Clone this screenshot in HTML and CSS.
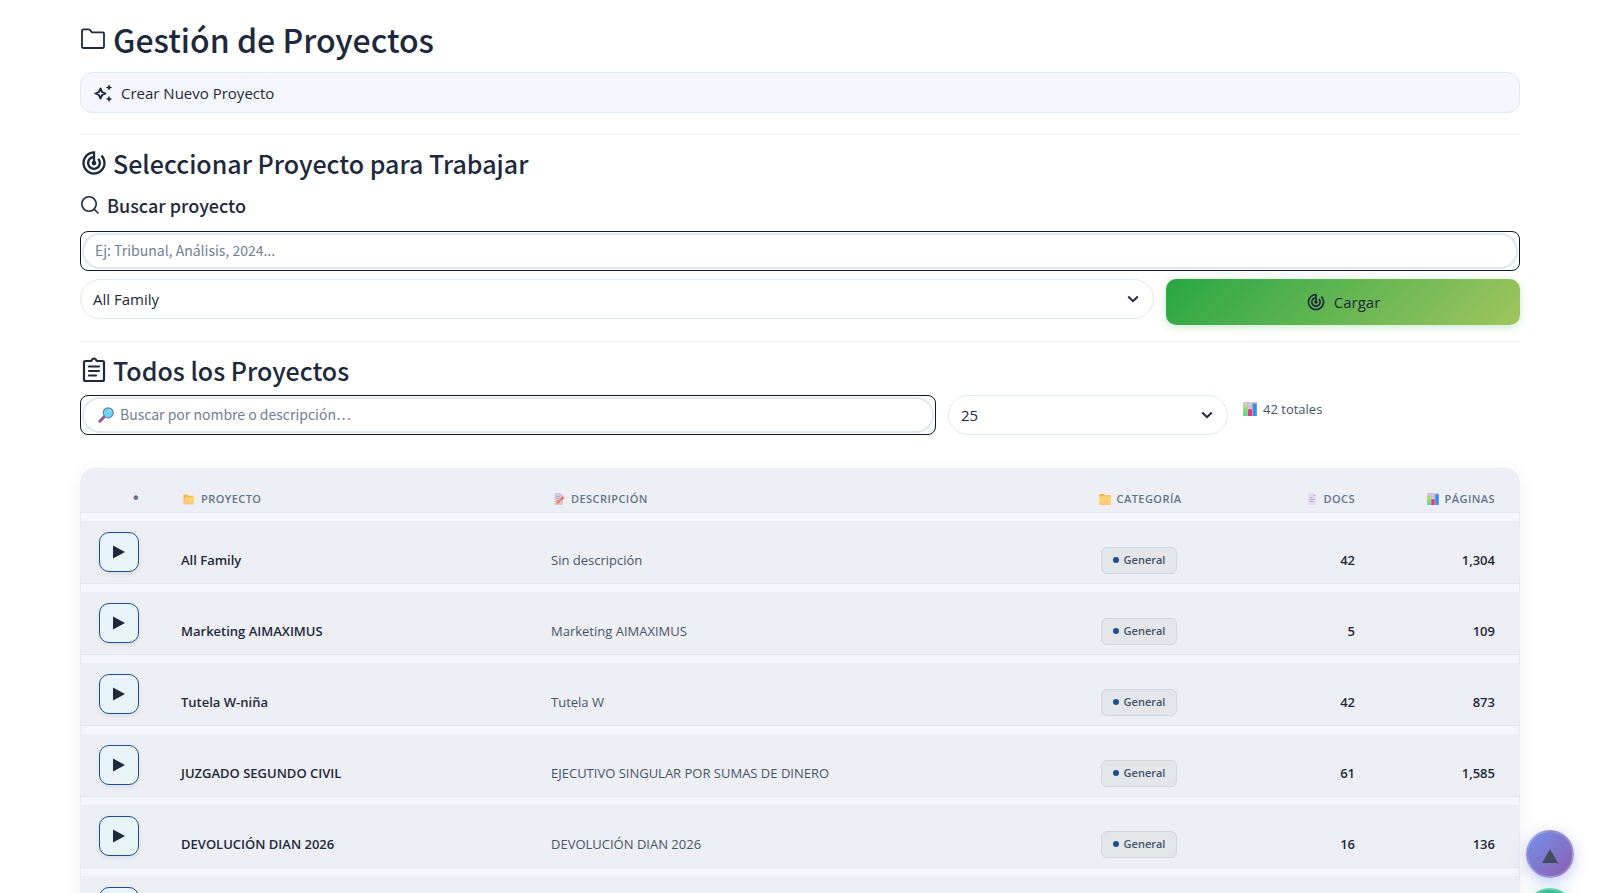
FILE: index.html
```html
<!DOCTYPE html>
<html lang="es">
<head>
<meta charset="UTF-8">
<meta name="viewport" content="width=device-width, initial-scale=1.0">
<title>Gestión de Proyectos</title>
<link rel="stylesheet" href="styles.css">
</head>
<body>

<main class="page">
    <h1 class="title">
        <svg class="icon-title" viewBox="0 0 26 26" aria-hidden="true"><path fill="none" stroke="currentColor" stroke-width="1.800" stroke-linejoin="round" d="M2 4.500Q2 3.300 3.200 3.300H8.600Q9.300 3.300 9.800 3.800L12 6.300H22.800Q24 6.300 24 7.500V20.800Q24 22 22.800 22H3.200Q2 22 2 20.800z"/></svg>
        Gestión de Proyectos
    </h1>

    <button class="expander" type="button">
        <svg class="icon-small" viewBox="0 0 20 20" aria-hidden="true"><path fill="none" stroke="currentColor" stroke-width="1.900" stroke-linejoin="round" d="M7.500 5.500L9.100 9l3.500 1.500L9.100 12l-1.600 3.500L5.900 12l-3.500-1.500L5.900 9z"/><path fill="currentColor" d="M16 1.200l1 2.200 2.200 1-2.200 1-1 2.200-1-2.200-2.200-1 2.200-1zM16 12.800l1 2.200 2.200 1-2.200 1-1 2.200-1-2.200-2.200-1 2.200-1z"/></svg>
        Crear Nuevo Proyecto
    </button>

    <hr class="divider">

    <!-- Project picker -->
    <h2 class="heading">
        <svg class="icon-heading" aria-hidden="true"><use href="#target"/></svg>
        Seleccionar Proyecto para Trabajar
    </h2>
    <label class="search-label" for="projectSearch">
        <svg class="icon-small" viewBox="0 0 20 20" aria-hidden="true"><g fill="none" stroke="currentColor" stroke-width="1.600" stroke-linecap="round"><circle cx="9" cy="9" r="7.200"/><path d="M14.500 14.500l3.500 3.500"/></g></svg>
        Buscar proyecto
    </label>
    <div class="field">
        <input id="projectSearch" type="text" placeholder="Ej: Tribunal, Análisis, 2024...">
    </div>
    <div class="picker-row">
        <div class="select-box">
            <select aria-label="Proyecto">
                <option>All Family</option>
            </select>
            <svg class="chevron" aria-hidden="true"><use href="#chevron"/></svg>
        </div>
        <button class="load-button" type="button">
            <svg class="icon-small" aria-hidden="true"><use href="#target"/></svg>
            Cargar
        </button>
    </div>

    <hr class="divider">

    <!-- All projects -->
    <h2 class="heading">
        <svg class="icon-heading" viewBox="0 0 28 28" aria-hidden="true"><g fill="none" stroke="currentColor" stroke-width="2.200" stroke-linejoin="round" stroke-linecap="round"><path d="M5.500 5H10.500M17.500 5H22.500Q24 5 24 6.500V23.500Q24 25 22.500 25H5.500Q4 25 4 23.500V6.500Q4 5 5.500 5"/><path d="M10.500 5Q11.500 5 11.800 4.100Q12.500 2.500 14 2.500T16.200 4.100Q16.500 5 17.500 5"/><path d="M9 10.500H19M9 15H19M9 19.500H16"/></g></svg>
        Todos los Proyectos
    </h2>
    <div class="filter-row">
        <div class="field with-icon">
            <input type="text" aria-label="Buscar proyectos" placeholder="Buscar por nombre o descripción…">
            <svg class="field-icon" viewBox="0 0 16 16" aria-hidden="true"><path stroke="#8d5a97" stroke-width="3" stroke-linecap="round" d="M1.800 14.200L5.800 10.200"/><circle cx="10.200" cy="5.800" r="5" fill="#6fd3f5" stroke="#6d83ab" stroke-width="1.200"/><circle cx="12" cy="4" r="1" fill="#b7ecfc"/></svg>
        </div>
        <div class="select-box">
            <select aria-label="Proyectos por página">
                <option>25</option>
            </select>
            <svg class="chevron" aria-hidden="true"><use href="#chevron"/></svg>
        </div>
        <p class="total"><svg class="icon-chart" aria-hidden="true"><use href="#chart"/></svg>42 totales</p>
    </div>

    <div class="table-card">
        <table>
            <colgroup>
                <col class="col-open">
                <col class="col-name">
                <col>
                <col class="col-category">
                <col class="col-docs">
                <col class="col-pages">
            </colgroup>
            <thead>
                <tr>
                    <th class="open"><span class="dot">•</span></th>
                    <th><svg class="icon-th" viewBox="0 0 12 12" aria-hidden="true"><path fill="#f5b948" d="M.5 1.500h4l1 1.200H10V11H.5z"/><path fill="url(#folderFill)" d="M2.500 4.500H12L10.300 11.500H.5z"/></svg>Proyecto</th>
                    <th><svg class="icon-th" viewBox="0 0 12 12" aria-hidden="true"><path fill="#d5cbe0" d="M1.500 0h6l2.500 2.500V12H1.500z"/><path stroke="#b3a5c2" stroke-width=".8" d="M3 3.500h4M3 5.500h4M3 7.500h2"/><path stroke="#f9793f" stroke-width="2.200" d="M4 10.200L9 5.500"/><path stroke="#e9506a" stroke-width="2.200" d="M9 5.500L10.500 4.200"/></svg>Descripción</th>
                    <th class="center"><svg class="icon-th" viewBox="0 0 12 12" aria-hidden="true"><path fill="#f2b544" d="M.3 1h4.500L6 2.300h5.700V6H.3z"/><path fill="url(#folderFill)" d="M.3 3.500h11.400V12H.3z"/></svg>Categoría</th>
                    <th class="number"><svg class="icon-th" viewBox="0 0 12 12" aria-hidden="true"><path fill="#e6def0" d="M2 .5h5.500L10 3v9H2z"/><path fill="#c6b6d6" d="M7.500.5L10 3H7.500z"/><path stroke="#b5a3c6" stroke-width=".9" d="M3.500 4.500h3M3.500 6.500h5M3.500 8.500h4"/></svg>Docs</th>
                    <th class="number"><svg class="icon-th" aria-hidden="true"><use href="#chart"/></svg>Páginas</th>
                </tr>
            </thead>
            <tbody>
                <tr>
                    <td class="open"><button class="play" type="button" aria-label="Abrir"><svg aria-hidden="true"><use href="#play"/></svg></button></td>
                    <td class="name">All Family</td>
                    <td>Sin descripción</td>
                    <td class="center"><span class="badge">General</span></td>
                    <td class="number">42</td>
                    <td class="number">1,304</td>
                </tr>
                <tr>
                    <td class="open"><button class="play" type="button" aria-label="Abrir"><svg aria-hidden="true"><use href="#play"/></svg></button></td>
                    <td class="name">Marketing AIMAXIMUS</td>
                    <td>Marketing AIMAXIMUS</td>
                    <td class="center"><span class="badge">General</span></td>
                    <td class="number">5</td>
                    <td class="number">109</td>
                </tr>
                <tr>
                    <td class="open"><button class="play" type="button" aria-label="Abrir"><svg aria-hidden="true"><use href="#play"/></svg></button></td>
                    <td class="name">Tutela W-niña</td>
                    <td>Tutela W</td>
                    <td class="center"><span class="badge">General</span></td>
                    <td class="number">42</td>
                    <td class="number">873</td>
                </tr>
                <tr>
                    <td class="open"><button class="play" type="button" aria-label="Abrir"><svg aria-hidden="true"><use href="#play"/></svg></button></td>
                    <td class="name">JUZGADO SEGUNDO CIVIL</td>
                    <td>EJECUTIVO SINGULAR POR SUMAS DE DINERO</td>
                    <td class="center"><span class="badge">General</span></td>
                    <td class="number">61</td>
                    <td class="number">1,585</td>
                </tr>
                <tr>
                    <td class="open"><button class="play" type="button" aria-label="Abrir"><svg aria-hidden="true"><use href="#play"/></svg></button></td>
                    <td class="name">DEVOLUCIÓN DIAN 2026</td>
                    <td>DEVOLUCIÓN DIAN 2026</td>
                    <td class="center"><span class="badge">General</span></td>
                    <td class="number">16</td>
                    <td class="number">136</td>
                </tr>
                <tr>
                    <td class="open"><button class="play" type="button" aria-label="Abrir"><svg aria-hidden="true"><use href="#play"/></svg></button></td>
                    <td class="name"></td>
                    <td></td>
                    <td></td>
                    <td class="number"></td>
                    <td class="number"></td>
                </tr>
            </tbody>
        </table>
    </div>
</main>

<!-- Floating scroll buttons -->
<div class="floating">
    <button class="float-up" type="button" aria-label="Subir"><svg viewBox="0 0 16 14" aria-hidden="true"><path fill="currentColor" d="M8 0l8 14H0z"/></svg></button>
    <button class="float-down" type="button" aria-label="Bajar"></button>
</div>

<!-- Shared icons -->
<svg class="sprite" width="0" height="0" aria-hidden="true">
    <defs>
        <linearGradient id="folderFill" x1="0" y1="0" x2="0" y2="1">
            <stop offset="0" stop-color="#ffdc78"/>
            <stop offset="1" stop-color="#ffc27a"/>
        </linearGradient>
        <linearGradient id="barGreen" x1="0" y1="0" x2="0" y2="1">
            <stop offset="0" stop-color="#b5e05f"/>
            <stop offset="1" stop-color="#4fdc8c"/>
        </linearGradient>
    </defs>
    <symbol id="target" viewBox="0 0 24 24">
        <path fill="currentColor" d="M19.07 4.93l-1.41 1.41C19.1 7.79 20 9.79 20 12c0 4.42-3.58 8-8 8s-8-3.58-8-8c0-4.08 3.05-7.44 7-7.93v2.02C8.16 6.57 6 9.03 6 12c0 3.31 2.69 6 6 6s6-2.69 6-6c0-1.66-.67-3.16-1.76-4.24l-1.41 1.41C15.55 9.9 16 10.9 16 12c0 2.21-1.79 4-4 4s-4-1.79-4-4c0-1.86 1.28-3.41 3-3.86v2.14c-.6.35-1 .98-1 1.72 0 1.1.9 2 2 2s2-.9 2-2c0-.74-.4-1.38-1-1.72V2h-1C6.48 2 2 6.48 2 12s4.48 10 10 10 10-4.48 10-10c0-2.76-1.12-5.26-2.93-7.07z"/>
    </symbol>
    <symbol id="chevron" viewBox="0 0 12 8">
        <path fill="none" stroke="currentColor" stroke-width="2" d="M1.2 1.5L6 6.2l4.800-4.700"/>
    </symbol>
    <symbol id="play" viewBox="0 0 12 14">
        <path fill="currentColor" d="M0 .5v13L12 7z"/>
    </symbol>
    <symbol id="chart" viewBox="0 0 14 14">
        <path fill="#d3c8dc" d="M0 0h14v14H0z"/>
        <path fill="none" stroke="#b9aec4" stroke-width=".6" d="M0 4.500h14M4.600 0v14M9.200 0v14"/>
        <path fill="url(#barGreen)" d="M.3 3.500h4V14h-4z"/>
        <path fill="#e23a83" d="M5 7.200h4V14H5z"/>
        <path fill="#3a8fe6" d="M9.700 1.500h4V14h-4z"/>
    </symbol>
</svg>

</body>
</html>
```

FILE: styles.css
```css
* {
    box-sizing: border-box;
}

html {
    scrollbar-width: none;
}

body {
    margin: 0;
    background: #fff;
    color: #1e293b;
    font-family: "Open Sans", "Noto Sans", sans-serif;
    font-size: 15px;
    line-height: 24px;
}

button,
input,
select {
    font: inherit;
    color: inherit;
}

.sprite {
    display: block;
}

.page {
    padding: 16px 5% 0;
}

/* Headings */
.title,
.heading,
.search-label {
    display: flex;
    align-items: center;
    margin: 0;
    font-family: "Noto Sans CJK JP", sans-serif;
    font-weight: 500;
}

.title {
    gap: 7px;
    height: 46px;
    font-size: 32px;
    line-height: 46px;
}

.heading {
    gap: 5px;
    height: 32px;
    font-size: 25px;
    line-height: 32px;
}

.search-label {
    gap: 7px;
    height: 24px;
    margin: 14px 0;
    font-size: 18px;
}

.icon-title {
    width: 26px;
    height: 26px;
}

.icon-heading {
    width: 28px;
    height: 28px;
}

.icon-small {
    width: 20px;
    height: 20px;
    flex: none;
}

.expander {
    display: flex;
    align-items: center;
    gap: 8px;
    width: 100%;
    height: 41px;
    margin-top: 10px;
    padding: 0 12px;
    border: 1px solid #e2e8f0;
    border-radius: 12px;
    background: #f4f6fb;
    text-align: left;
}

.divider {
    height: 1px;
    margin: 21px 0 12px;
    border: 0;
    background: #f0f2f5;
}

/* Inputs */
.field {
    position: relative;
    height: 40px;
    padding: 1px;
    border: 1px solid #0f172a;
    border-radius: 8px;
}

.field input {
    width: 100%;
    height: 100%;
    padding: 0 11px 2px;
    border: 2px solid #e2e8f0;
    border-radius: 18px;
    background: #fff;
    font-family: "Noto Sans CJK JP", sans-serif;
    font-size: 14px;
    outline: none;
}

.field input::placeholder {
    color: #718096;
    opacity: 1;
}

.with-icon input {
    padding-left: 36px;
}

.field-icon {
    position: absolute;
    left: 17px;
    top: 11px;
    width: 16px;
    height: 16px;
}

.select-box {
    position: relative;
    height: 40px;
}

.select-box select {
    width: 100%;
    height: 100%;
    padding: 0 12px;
    border: 1px solid #e2e8f0;
    border-radius: 20px;
    background: #fff;
    appearance: none;
}

.chevron {
    position: absolute;
    right: 15px;
    top: 16px;
    width: 12px;
    height: 8px;
    pointer-events: none;
}

.picker-row {
    display: grid;
    grid-template-columns: 1074fr 354fr;
    gap: 12px;
    margin-top: 8px;
}

.load-button {
    display: flex;
    align-items: center;
    justify-content: center;
    gap: 8px;
    height: 46px;
    border: 0;
    border-radius: 10px;
    background: linear-gradient(135deg, #28a745, #a0c55f);
    box-shadow: 0 2px 8px rgba(40, 167, 69, 0.25);
}

.picker-row + .divider {
    margin-top: 16px;
}

.filter-row {
    display: grid;
    grid-template-columns: 856fr 280fr 280fr;
    gap: 12px;
    margin-top: 9px;
}

.total {
    display: flex;
    align-items: center;
    gap: 6px;
    height: 28px;
    margin: 0;
    padding-left: 3px;
    color: #475569;
    font-size: 13px;
}

.icon-chart {
    width: 14px;
    height: 14px;
}

/* Projects table */
.table-card {
    margin-top: 33px;
    border: 1px solid #e8ecf2;
    border-radius: 14px;
    background: #f4f6fb;
    box-shadow: 0 4px 20px rgba(15, 23, 42, 0.06);
    overflow: hidden;
}

table {
    width: 100%;
    border-collapse: separate;
    border-spacing: 0;
    table-layout: fixed;
}

.col-open {
    width: 86px;
}

.col-name {
    width: 370px;
}

.col-category,
.col-docs {
    width: 160px;
}

.col-pages {
    width: 140px;
}

th,
td {
    padding: 0 14px;
    border-bottom: 1px solid #e4e8ef;
    background: #eeeff4;
    text-align: left;
}

th {
    height: 44px;
    padding-top: 16px;
    color: #64748b;
    font-size: 11px;
    font-weight: 600;
    line-height: 24px;
    letter-spacing: 0.04em;
    text-transform: uppercase;
}

td {
    height: 71px;
    padding-top: 16px;
    border-top: 8px solid #f4f6fb;
    color: #475569;
    font-size: 13px;
}

.name,
td.number {
    color: #1e293b;
    font-weight: 600;
}

.center {
    text-align: center;
}

.number {
    padding-right: 24px;
    text-align: right;
}

th.open {
    padding-right: 28px;
    text-align: right;
}

td.open {
    padding: 0 0 0 18px;
}

.dot {
    font-family: "Liberation Sans", sans-serif;
    font-size: 16px;
}

.icon-th {
    width: 12px;
    height: 12px;
    margin: 0 6px 0 2px;
    vertical-align: -2px;
}

.play {
    display: flex;
    align-items: center;
    justify-content: center;
    width: 40px;
    height: 40px;
    padding: 0;
    border: 1px solid #1b4f8f;
    border-radius: 10px;
    background: linear-gradient(135deg, #e8f2ff, #e8f5f0);
    box-shadow: 0 2px 4px rgba(15, 23, 42, 0.08);
    color: #1e293b;
}

.play svg {
    width: 12px;
    height: 14px;
}

.badge {
    display: inline-flex;
    align-items: center;
    gap: 5px;
    height: 27px;
    padding: 0 11px;
    border: 1px solid #d3d6db;
    border-radius: 6px;
    background: #e4e6ea;
    font-size: 11px;
    font-weight: 600;
    vertical-align: middle;
}

.badge::before {
    content: "";
    width: 6px;
    height: 6px;
    border-radius: 50%;
    background: #1b4f8f;
}

/* Floating buttons */
.floating {
    position: fixed;
    right: 26px;
    bottom: -43px;
    display: flex;
    flex-direction: column;
    gap: 10px;
}

.floating button {
    display: flex;
    align-items: center;
    justify-content: center;
    width: 48px;
    height: 48px;
    padding: 0;
    border: 2px solid rgba(255, 255, 255, 0.2);
    border-radius: 50%;
    color: #434b5e;
}

.floating svg {
    width: 16px;
    height: 14px;
    margin-top: 3px;
}

.float-up {
    background: linear-gradient(135deg, #7590ea, #8a5fb0);
    box-shadow: 0 4px 15px rgba(102, 126, 234, 0.4);
}

.float-down {
    background: linear-gradient(135deg, #38b593, #45d39a);
    box-shadow: 0 4px 15px rgba(56, 181, 147, 0.4);
}
```
